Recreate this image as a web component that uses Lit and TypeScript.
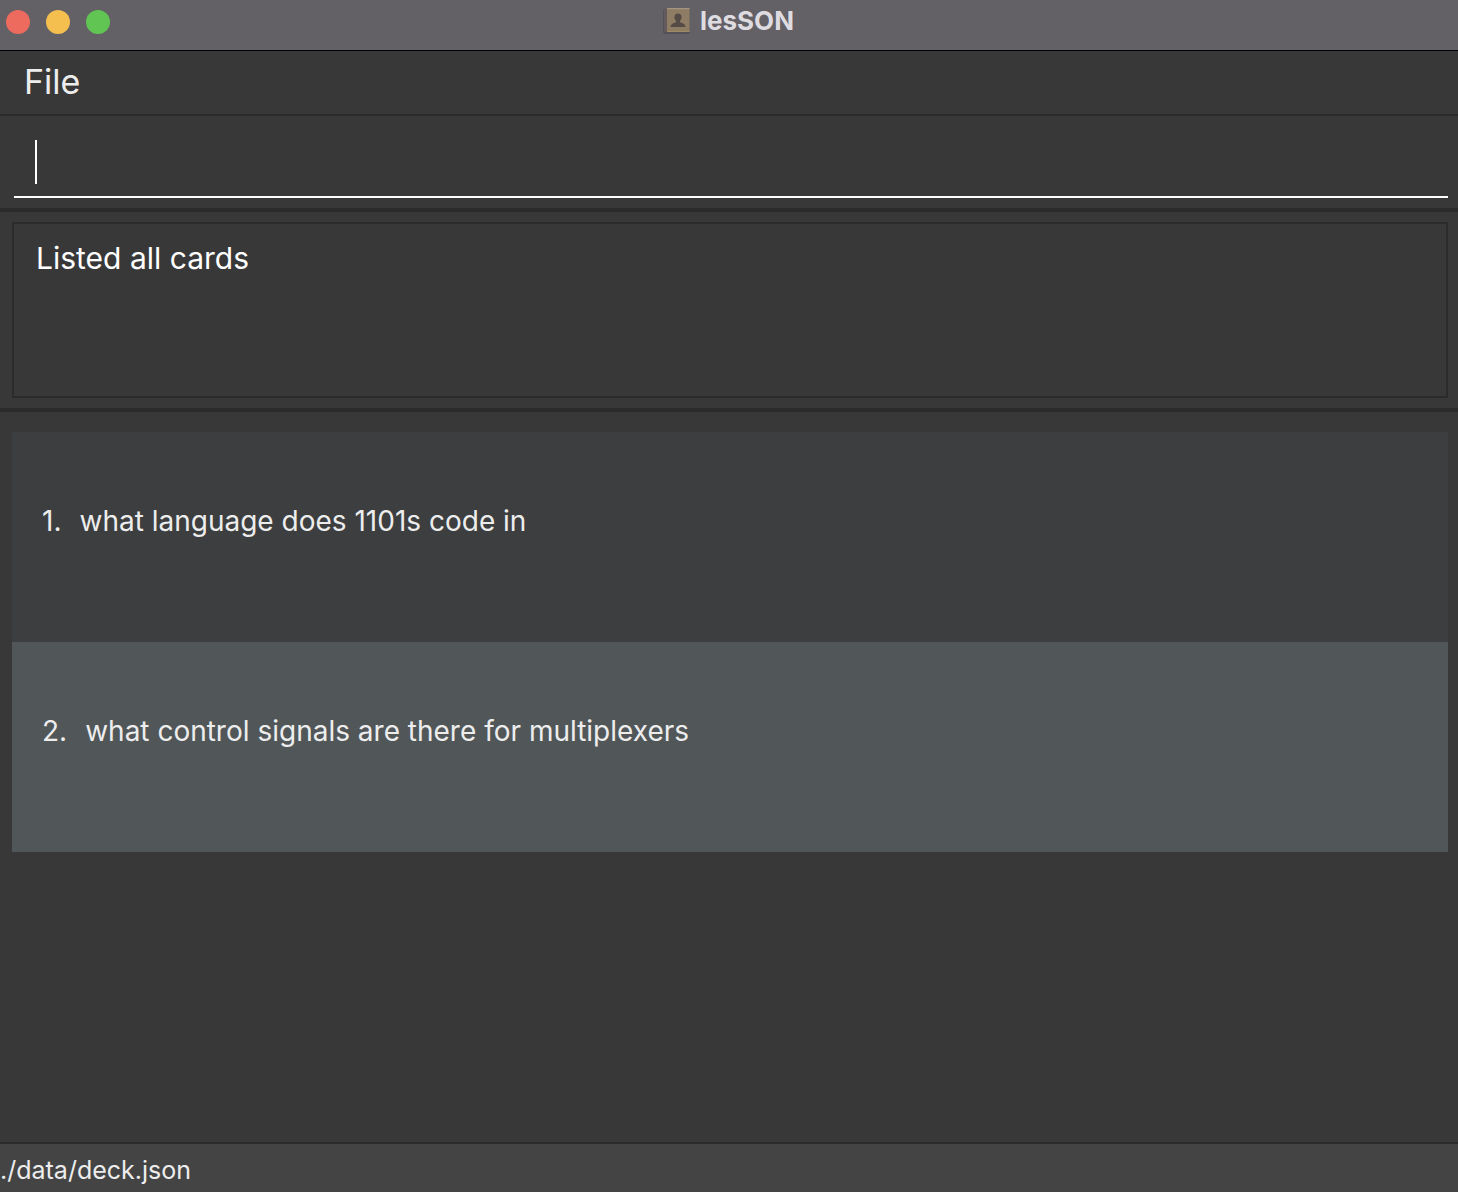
import { LitElement, html, css } from "lit";
import { customElement, state } from "lit/decorators.js";

interface Card {
  id: number;
  question: string;
}

@customElement("app-root")
export class AppRoot extends LitElement {
  static styles = css`
    :host {
      display: flex;
      flex-direction: column;
      min-height: 100vh;
      background: #383838;
      color: #ededed;
      font-family: Inter, "Liberation Sans", sans-serif;
      font-size: 28px;
      line-height: 40px;
    }
    *,
    *::before {
      box-sizing: border-box;
    }
    button,
    input {
      margin: 0;
      padding: 0;
      border: 0;
      outline: 0;
      background: none;
      color: inherit;
      font: inherit;
    }
    .titlebar {
      display: grid;
      grid-template-columns: 1fr auto 1fr;
      align-items: center;
      height: 51px;
      padding: 0 8px 8px 6px;
      border-bottom: 1px solid #000;
      background: #636066;
    }
    .lights {
      display: flex;
      gap: 16px;
      padding-top: 2px;
    }
    .light {
      width: 24px;
      height: 24px;
      border-radius: 50%;
    }
    .close {
      background: #ed6a5f;
    }
    .minimise {
      background: #f5bf4f;
    }
    .zoom {
      background: #61c554;
    }
    .title {
      display: flex;
      align-items: center;
      gap: 8px;
      margin: 0;
      color: #dedce0;
      font-size: 26px;
      font-weight: 700;
      line-height: 40px;
    }
    .book {
      display: block;
      width: 30px;
      height: 28px;
    }
    .menu {
      height: 65px;
      padding: 10px 24px;
      border-bottom: 2px solid #2b2b2b;
    }
    .menu-item {
      font-size: 34px;
      line-height: 42px;
    }
    .command {
      padding: 12px 10px 10px 14px;
      border-bottom: 4px solid #2b2b2b;
    }
    .field {
      display: flex;
      align-items: center;
      height: 70px;
      padding: 0 21px;
      border-bottom: 2px solid #fff;
      color: #fff;
    }
    .caret {
      width: 2px;
      height: 44px;
      background: #fff;
    }
    .entry {
      flex: 1;
      min-width: 0;
      height: 44px;
      caret-color: transparent;
      font-size: 30px;
    }
    .result {
      padding: 10px 10px 10px 12px;
      border-bottom: 4px solid #2b2b2b;
    }
    .message {
      min-height: 176px;
      padding: 14px 22px;
      border: 2px solid #2b2b2b;
      color: #fff;
      font-size: 30px;
    }
    .cards {
      flex: 1;
      margin: 0;
      padding: 20px 10px 20px 12px;
      list-style: none;
    }
    .card {
      display: flex;
      gap: 18px;
      min-height: 210px;
      padding: 69px 30px;
      background: #3c3e3f;
    }
    .card:nth-child(even) {
      background: #515658;
    }
    .status {
      height: 50px;
      padding: 6px 0;
      border-top: 2px solid #2b2b2b;
      background: #444;
      font-size: 25px;
    }
  `;

  @state() private cards: Card[] = [
    { id: 1, question: "what language does 1101s code in" },
    { id: 2, question: "what control signals are there for multiplexers" },
  ];

  render() {
    return html`
      <header class="titlebar">
        <div class="lights">
          <button class="light close" aria-label="Close"></button>
          <button class="light minimise" aria-label="Minimise"></button>
          <button class="light zoom" aria-label="Zoom"></button>
        </div>
        <h1 class="title">
          <svg class="book" viewBox="0 0 30 28" aria-hidden="true">
            <rect x="1" y="2" width="27" height="25" rx="2" fill="#565158" />
            <rect x="2" y="1" width="26" height="24" rx="1" fill="#625a5c" />
            <path d="M5 1h22.500v24H5z" fill="#8e7c64" />
            <path d="M5 1h22.500v1.200H5z" fill="#a29581" />
            <path d="M5 24h22.500v1H5z" fill="#a08a62" />
            <path
              d="M16 6.500c2.400 0 3.700 1.600 3.600 3.800-.1 1.600-.8 2.800-1.600 3.600v1.300c2.200.8 5.200 1.400 5.500 4.800H8.500c.3-3.400 3.300-4 5.500-4.800v-1.300c-.8-.8-1.500-2-1.600-3.600C12.300 8.100 13.600 6.500 16 6.500z"
              fill="#544b46"
            />
          </svg>
          lesSON
        </h1>
      </header>
      <nav class="menu"><button class="menu-item">File</button></nav>
      <section class="command">
        <div class="field">
          <span class="caret"></span>
          <input class="entry" type="text" aria-label="Command" />
        </div>
      </section>
      <section class="result">
        <div class="message" role="status">Listed all cards</div>
      </section>
      <ol class="cards">
        ${this.cards.map(
          (card) => html`<li class="card">
            <span>${card.id}.</span><span>${card.question}</span>
          </li>`
        )}
      </ol>
      <footer class="status">./data/deck.json</footer>
    `;
  }
}
